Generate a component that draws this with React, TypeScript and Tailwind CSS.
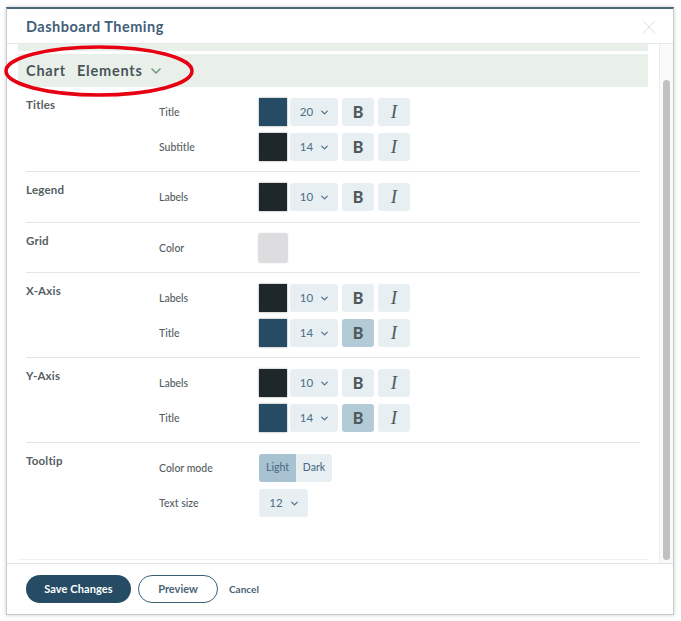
import React from "react";

const Chevron = ({ className = "" }: { className?: string }) => (
  <svg viewBox="0 0 10 6" className={className} fill="none" stroke="currentColor" strokeWidth="1.7" strokeLinecap="round" strokeLinejoin="round">
    <path d="M1 1l4 4 4-4" />
  </svg>
);

const Swatch = ({ color }: { color: string }) => (
  <div className={`w-[28px] h-[28px] shadow-[0_0_2px_rgba(0,0,0,0.4)] ${color}`} />
);

const Size = ({ value, w = "w-[48px]" }: { value: string; w?: string }) => (
  <div className={`${w} h-[28px] rounded-[3px] bg-[#e8eff3] flex items-center justify-center gap-[8px] text-[11.5px] text-[#4a6e85]`}>
    <span>{value}</span>
    <Chevron className="w-[7px] h-[5px] text-[#4a6e85]" />
  </div>
);

const Bold = ({ on }: { on?: boolean }) => (
  <div className={`w-[32px] h-[28px] rounded-[3px] flex items-center justify-center font-['Lato',sans-serif] font-black text-[16px] text-[#4f5a60] ${on ? "bg-[#b3cad7]" : "bg-[#e8eff3]"}`}>
    B
  </div>
);

const Italic = () => (
  <div className="w-[32px] h-[28px] rounded-[3px] bg-[#e8eff3] flex items-center justify-center font-['Liberation_Serif',serif] italic text-[19px] text-[#4f5a60]">
    I
  </div>
);

const StyleRow = ({ label, color, size, bold }: { label: string; color: string; size: string; bold?: boolean }) => (
  <Row label={label}>
    <Swatch color={color} />
    <div className="ml-[3px]"><Size value={size} /></div>
    <div className="ml-[4px]"><Bold on={bold} /></div>
    <div className="ml-[4px]"><Italic /></div>
  </Row>
);

const Row = ({ label, children }: { label: string; children: React.ReactNode }) => (
  <div className="flex items-center h-[28px]">
    <div className="w-[100px] pt-[1px] text-[10.5px] font-medium text-[#555e63]">{label}</div>
    {children}
  </div>
);

const Section = ({ title, children, last, tall }: { title: string; children: React.ReactNode; last?: boolean; tall?: boolean }) => (
  <div className={`flex pt-[11px] ${tall ? "pb-[11px]" : "pb-[10px]"} ${last ? "" : "border-b border-[#e3e5e6]"}`}>
    <div className="w-[133px] text-[11.5px] font-bold leading-[14px] text-[#555e63] tracking-[0.2px]">{title}</div>
    <div className="flex flex-col gap-[7px]">{children}</div>
  </div>
);

const DARK = "bg-[#1e2729]";
const BLUE = "bg-[#254c64]";

export default function App() {
  return (
    <div className="relative w-[681px] h-[621px] bg-white p-[6px] pt-[7px] font-['Lato',sans-serif] overflow-hidden">
      <div className="w-[668px] h-[608px] flex flex-col bg-white border border-[#c5cbca] border-t-2 border-t-[#4a6478] shadow-[0_0_4px_rgba(0,0,0,0.2)]">
        <div className="h-[35px] shrink-0 flex items-center justify-between pl-[19px] pr-[17px] pt-[1px] border-b border-[#e6e8e8]">
          <div className="text-[14.5px] font-bold tracking-[0.5px] text-[#3f6078]">Dashboard Theming</div>
          <svg viewBox="0 0 14 14" className="w-[14px] h-[14px] text-[#dcdfe0]" fill="none" stroke="currentColor" strokeWidth="1">
            <path d="M1 1l12 12M13 1L1 13" />
          </svg>
        </div>
        <div className="flex-1 flex min-h-0">
          <div className="flex-1 flex flex-col pl-[11px] pr-[11px] pb-[3px]">
            <div className="flex-1 flex flex-col border-b border-[#f0f1f1]">
              <div className="h-[7px] bg-[#e9f0ea] shrink-0" />
              <div className="h-[33px] mt-[3px] bg-[#e9f0ea] shrink-0 flex items-center pl-[8px] text-[14.5px] font-bold tracking-[0.8px] text-[#4a5559]">
                <span>Chart</span>
                <span className="ml-[11px]">Elements</span>
                <Chevron className="w-[10px] h-[6px] text-[#7d9a85] ml-[8px]" />
              </div>
              <div className="mx-[8px]">
                <Section title="Titles">
                  <StyleRow label="Title" color={BLUE} size="20" />
                  <StyleRow label="Subtitle" color={DARK} size="14" />
                </Section>
                <Section title="Legend" tall>
                  <StyleRow label="Labels" color={DARK} size="10" />
                </Section>
                <Section title="Grid">
                  <Row label="Color"><Swatch color="bg-[#dddddf]" /></Row>
                </Section>
                <Section title="X-Axis">
                  <StyleRow label="Labels" color={DARK} size="10" />
                  <StyleRow label="Title" color={BLUE} size="14" bold />
                </Section>
                <Section title="Y-Axis">
                  <StyleRow label="Labels" color={DARK} size="10" />
                  <StyleRow label="Title" color={BLUE} size="14" bold />
                </Section>
                <Section title="Tooltip" last>
                  <Row label="Color mode">
                    <div className="flex h-[28px] rounded-[3px] overflow-hidden text-[10.5px] font-medium">
                      <div className="w-[37px] bg-[#a8c2d2] flex items-center justify-center text-[#4d6e84]">Light</div>
                      <div className="w-[36px] bg-[#e8eff3] flex items-center justify-center text-[#4d6e84]">Dark</div>
                    </div>
                  </Row>
                  <Row label="Text size"><Size value="12" w="w-[49px]" /></Row>
                </Section>
              </div>
            </div>
          </div>
          <div className="w-[14px] shrink-0 bg-[#fafafa] border-l border-[#ececec] pl-[3px] pt-[36px] pb-[3px]">
            <div className="w-[7px] h-full rounded-full bg-[#c1c1c1]" />
          </div>
        </div>
        <div className="h-[51px] shrink-0 border-t border-[#dfe2e2] flex items-center pl-[19px]">
          <button className="w-[105px] h-[28px] rounded-full bg-[#254c64] text-white text-[11px] font-bold tracking-[0.1px]">Save Changes</button>
          <button className="ml-[7px] w-[80px] h-[28px] rounded-full bg-white border border-[#3b6076] text-[#4a6478] text-[11px] font-bold">Preview</button>
          <span className="ml-[11px] text-[10px] font-bold text-[#4a6478]">Cancel</span>
        </div>
      </div>
      <svg className="absolute left-[3px] top-[44px] w-[192px] h-[54px]" viewBox="0 0 192 54" fill="none">
        <ellipse cx="96" cy="27" rx="93" ry="24" stroke="#e60012" strokeWidth="3.5" />
      </svg>
    </div>
  );
}
